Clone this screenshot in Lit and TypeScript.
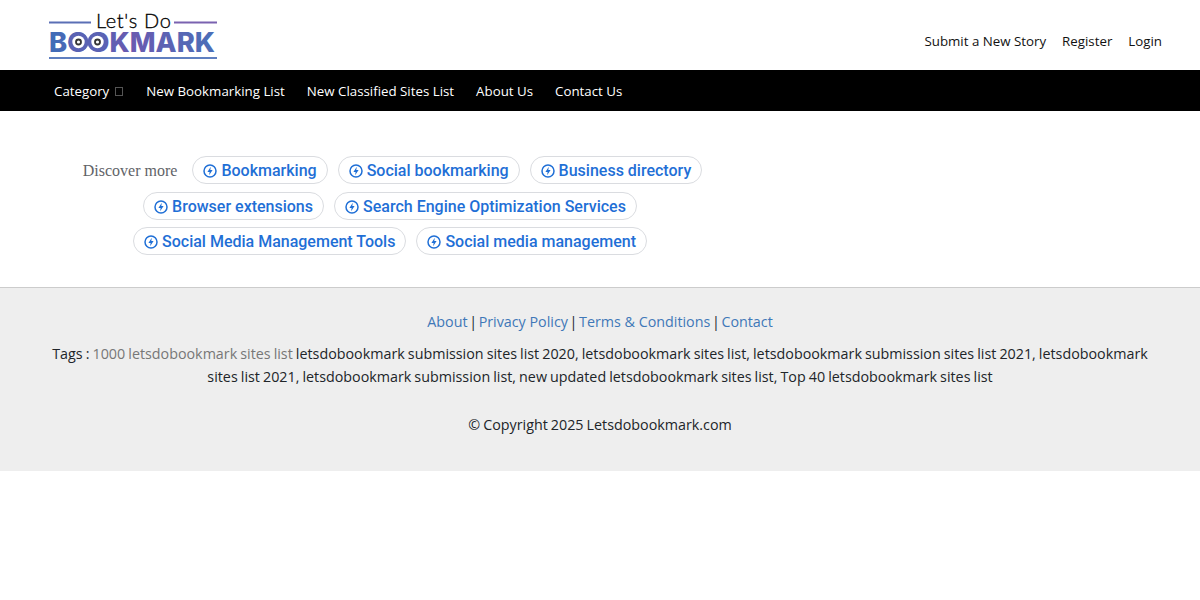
import { LitElement, html, css, svg } from "lit";
import { customElement } from "lit/decorators.js";

const bolt = svg`<svg class="ic" viewBox="0 0 14 14" width="14" height="14"><circle cx="7" cy="7" r="6" fill="none" stroke="currentColor" stroke-width="1.5"/><path d="M7.8 2.8 4.4 7.9H6.6L6.1 11.2 9.6 6.1H7.3Z" fill="currentColor"/></svg>`;

const pill = (t: string) => html`<a class="pill">${bolt}<span>${t}</span></a>`;

const eye = (x: number) => svg`<circle cx="${x}" cy="30" r="10" fill="#5a62b4"/><circle cx="${x}" cy="30" r="6.2" fill="#fff"/><circle cx="${x}" cy="30" r="3.4" fill="#333"/><circle cx="${x}" cy="30" r="1.6" fill="#fff"/>`;

@customElement("app-root")
export class AppRoot extends LitElement {
  static styles = css`
    :host { display: block; font-family: "Open Sans", "Noto Sans", sans-serif; font-size: 14px; color: #212529; background: #fff; }
    .top { height: 70px; display: flex; justify-content: space-between; padding: 0 38px 0 48px; }
    .logo { display: block; margin-top: 12px; }
    .toplinks { display: flex; gap: 16px; padding-top: 31px; line-height: 20px; color: #111; font-size: 13.3px; }
    .nav { height: 41px; background: #000; color: #fff; display: flex; align-items: center; padding-left: 54px; gap: 22px; font-size: 13.3px; }
    .box { display: inline-block; width: 6px; height: 7px; border: 1px solid #555; margin: 0 1px 0 6px; }
    .disc { width: 780px; padding-top: 45px; height: 131px; }
    .row { display: flex; justify-content: center; gap: 10px; height: 28px; margin-bottom: 8px; align-items: center; }
    .row.r3 { margin-top: -1px; }
    .label { font-family: "Liberation Serif", serif; font-size: 16px; color: #5f6368; margin: 1px 5px 0 5px; }
    .pill { display: flex; align-items: center; gap: 4px; height: 26px; padding: 0 10px; border: 1px solid #dadce0; border-radius: 14px; font-family: Roboto, sans-serif; font-weight: 500; font-size: 16px; color: #1f6fd6; }
    .ic { display: block; margin-top: 1px; }
    footer { border-top: 1px solid #ccc; background: #eee; height: 183px; padding: 0 40px; text-align: center; color: #212529; font-size: 14.3px; line-height: 23px; word-spacing: -0.65px; }
    .flinks { padding-top: 22px; margin-bottom: 9px; word-spacing: -2.1px; }
    .flinks a { color: #3f78b8; word-spacing: 0; }
    .tags { margin-bottom: 25px; }
    .grey { color: #777; }
  `;
  render() {
    return html`
      <div class="top">
        <svg class="logo" width="170" height="48" viewBox="0 0 170 48">
          <defs><linearGradient id="g" x1="0" x2="1" y1="0" y2="0"><stop offset="0" stop-color="#3f6db8"/><stop offset=".5" stop-color="#6a5ab0"/><stop offset="1" stop-color="#4a6fb8"/></linearGradient></defs>
          <rect x="1" y="9.5" width="42" height="2" fill="#5a6fb5"/><rect x="126" y="9.5" width="43" height="2" fill="#7a62b0"/>
          <text x="48" y="16" font-family="Lato" font-weight="300" font-size="20" fill="#000" stroke="#000" stroke-width=".3" textLength="75" lengthAdjust="spacing">Let's Do</text>
          <text x="1" y="40" font-family="Inter" font-size="27.5" font-weight="800" fill="url(#g)" textLength="166" lengthAdjust="spacingAndGlyphs">BOOKMARK</text>
          ${eye(30.5)}${eye(49.5)}
          <rect x="1" y="45" width="168" height="2" fill="#5f7fc0"/>
        </svg>
        <div class="toplinks"><span>Submit a New Story</span><span>Register</span><span>Login</span></div>
      </div>
      <div class="nav"><span>Category<i class="box"></i></span><span>New Bookmarking List</span><span>New Classified Sites List</span><span>About Us</span><span>Contact Us</span></div>
      <div class="disc">
        <div class="row"><span class="label">Discover more</span>${pill("Bookmarking")}${pill("Social bookmarking")}${pill("Business directory")}</div>
        <div class="row">${pill("Browser extensions")}${pill("Search Engine Optimization Services")}</div>
        <div class="row r3">${pill("Social Media Management Tools")}${pill("Social media management")}</div>
      </div>
      <footer>
        <div class="flinks"><a>About</a> | <a>Privacy Policy</a> | <a>Terms &amp; Conditions</a> | <a>Contact</a></div>
        <div class="tags">Tags : <span class="grey">1000 letsdobookmark sites list</span> letsdobookmark submission sites list 2020, letsdobookmark sites list, letsdobookmark submission sites list 2021, letsdobookmark sites list 2021, letsdobookmark submission list, new updated letsdobookmark sites list, Top 40 letsdobookmark sites list</div>
        <div>© Copyright 2025 Letsdobookmark.com</div>
      </footer>
    `;
  }
}
